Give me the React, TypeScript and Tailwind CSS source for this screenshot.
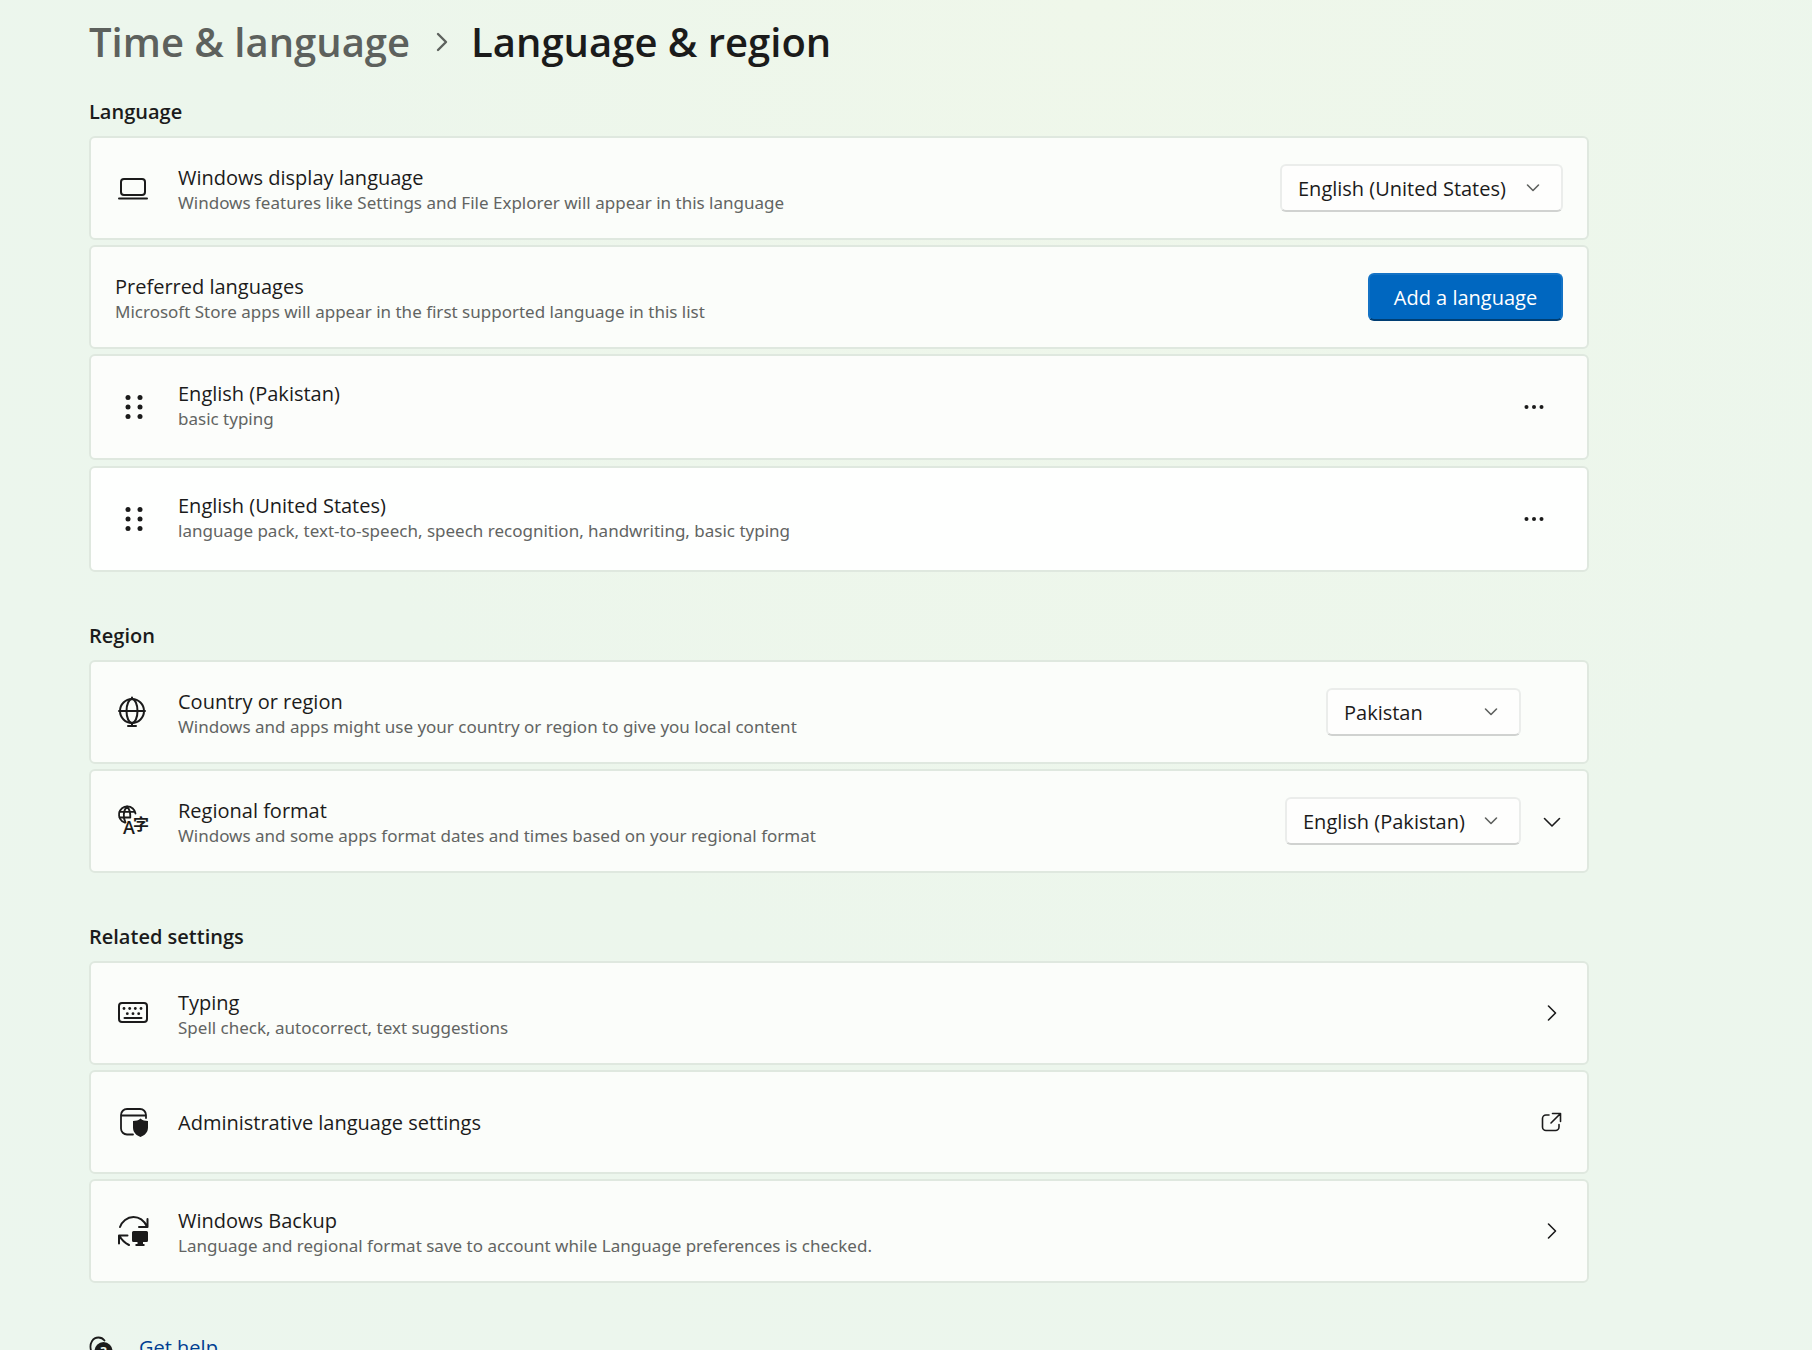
import type { ReactNode } from "react";

function Svg({ size, children }: { size: number; children: ReactNode }) {
  return (
    <svg
      width={size}
      height={size}
      viewBox={`0 0 ${size} ${size}`}
      fill="none"
      stroke="currentColor"
      strokeWidth="2"
      strokeLinecap="round"
      strokeLinejoin="round"
      aria-hidden
      className="shrink-0"
    >
      {children}
    </svg>
  );
}

const LaptopIcon = () => (
  <Svg size={36}>
    <rect x="6" y="9" width="24" height="16" rx="3" />
    <path d="M4 28.5H32" />
  </Svg>
);

const GripIcon = () => (
  <Svg size={36}>
    <g fill="currentColor" stroke="none">
      {[8.5, 18, 27.5].map((y) => (
        <g key={y}>
          <circle cx="13" cy={y} r="2.5" />
          <circle cx="25" cy={y} r="2.5" />
        </g>
      ))}
    </g>
  </Svg>
);

const GlobeIcon = () => (
  <Svg size={36}>
    <circle cx="17" cy="17" r="12" />
    <ellipse cx="17" cy="17" rx="5.5" ry="12" />
    <path d="M4 17H30M17 3.5V5M17 29V32M13 32H21" />
  </Svg>
);

const RegionalIcon = () => (
  <Svg size={36}>
    <g strokeWidth="1.8">
      <path d="M20.5 10.5A8.3 8.3 0 1 0 9.5 19.5" />
      <path d="M12 3.5C8 7.5 8 15 10.5 19.5M12 3.5C15 6.5 15.5 9.5 15.3 14.5M4.5 8.8H19.5M4.5 14.5H15" />
    </g>
    <g fill="currentColor" stroke="none">
      <text x="14" y="31" textAnchor="middle" fontSize="18" fontWeight="600" fontFamily="'Open Sans', sans-serif">
        A
      </text>
      <text x="26" y="26.5" textAnchor="middle" fontSize="16" fontWeight="700" fontFamily="'Noto Sans CJK SC', sans-serif">
        字
      </text>
    </g>
  </Svg>
);

const KeyboardIcon = () => (
  <Svg size={36}>
    <rect x="4" y="8" width="28" height="19" rx="3" />
    <path d="M9.5 23H26.5" />
    <g fill="currentColor" stroke="none">
      {[9, 14.7, 20.3, 26].map((x) => (
        <circle key={x} cx={x} cy="13.5" r="1.4" />
      ))}
      {[12.3, 18, 23.7].map((x) => (
        <circle key={x} cx={x} cy="18.7" r="1.4" />
      ))}
    </g>
  </Svg>
);

const AdminIcon = () => (
  <Svg size={36}>
    <path d="M18 30.5H12A6 6 0 0 1 6 24.5V11A6 6 0 0 1 12 5H25A6 6 0 0 1 31 11V14M6 11.5H31" strokeWidth="1.8" />
    <path
      d="M25.5 14.5C27.5 16.3 30 17 33 17V23.5C33 28.5 29.5 31.5 25.5 33C21.5 31.5 18 28.5 18 23.5V17C21 17 23.5 16.3 25.5 14.5Z"
      fill="currentColor"
      stroke="none"
    />
  </Svg>
);

const BackupIcon = () => (
  <Svg size={36}>
    <path d="M5 14C7 8.5 12 4 18.500 4C24.500 4 29 7.500 32 13.500M32.500 6V14H24" />
    <path d="M12.500 22.500H4V30.500M4.500 23C7 27.500 10 30 14 32" />
    <path
      d="M18.500 18H31.500A1.500 1.500 0 0 1 33 19.500V27.500A1.500 1.500 0 0 1 31.500 29H28V31H29.500V33H20.500V31H22.500V29H18.500A1.500 1.500 0 0 1 17 27.500V19.500A1.500 1.500 0 0 1 18.500 18Z"
      fill="currentColor"
      stroke="none"
    />
  </Svg>
);

const HelpIcon = () => (
  <Svg size={24}>
    <path d="M1.500 21C1.800 19 2.300 17 2 14.500C0 7 4 1.500 9.500 1.500C12 1.500 14 2.500 15.500 4.500" strokeWidth="1.800" />
    <circle cx="14.500" cy="15" r="9" fill="currentColor" stroke="none" />
    <text x="14.500" y="19.500" textAnchor="middle" fontSize="13" fontWeight="700" fontFamily="'Open Sans', sans-serif" fill="#ecf6ec" stroke="none">
      ?
    </text>
  </Svg>
);

const ChevronRight = () => (
  <Svg size={22}>
    <path d="M7.500 4L14.500 11L7.500 18" strokeWidth="1.600" />
  </Svg>
);

const ExternalIcon = () => (
  <Svg size={22}>
    <g strokeWidth="1.600">
      <path d="M8 4H5A3.500 3.500 0 0 0 1.500 7.500V16A3.500 3.500 0 0 0 5 19.500H14.500A3.500 3.500 0 0 0 18 16V13.500" />
      <path d="M11.500 2.500H19.500V10.500M19 3L10 12" />
    </g>
  </Svg>
);

const MoreIcon = () => (
  <Svg size={22}>
    <g fill="currentColor" stroke="none">
      <circle cx="3.500" cy="11" r="2" />
      <circle cx="11" cy="11" r="2" />
      <circle cx="18.500" cy="11" r="2" />
    </g>
  </Svg>
);

function Section({ title, children }: { title: string; children: ReactNode }) {
  return (
    <section className="mb-[50px]">
      <h2 className="mb-[10px] text-[20px] leading-7 font-semibold">{title}</h2>
      <div className="flex flex-col gap-[5px]">{children}</div>
    </section>
  );
}

const cardBase = "flex w-full items-center rounded-md border-2 border-[#dfe8df] px-6 text-left";

type RowBodyProps = { icon?: ReactNode; title: string; note?: string; htmlFor?: string; inset?: string };

function RowBody({ icon, title, note, htmlFor, inset = "pt-0.5" }: RowBodyProps) {
  return (
    <>
      {icon && <span className="mr-[27px] flex">{icon}</span>}
      <span className={`flex min-w-0 flex-1 flex-col ${inset}`}>
        {htmlFor ? (
          <label htmlFor={htmlFor} className="text-[20px] leading-7">
            {title}
          </label>
        ) : (
          <span className="text-[20px] leading-7">{title}</span>
        )}
        {note && (
          <span className="font-['Noto_Sans','Open_Sans',sans-serif] text-[17px] leading-[22px] text-[#626462]">{note}</span>
        )}
      </span>
    </>
  );
}

function Picker({ id, value, width }: { id: string; value: string; width: string }) {
  return (
    <span className={`relative flex ${width}`}>
      <select
        id={id}
        defaultValue={value}
        className="h-12 w-full appearance-none rounded-md border-2 border-[#ebedeb] border-b-[#d0d2d0] bg-[#fefefd] pt-0.5 pl-4 text-[20px] text-[#1b1b1b]"
      >
        <option>{value}</option>
      </select>
      <span className="pointer-events-none absolute inset-y-0 right-[23px] flex items-center text-[#5f615f]">
        <svg width="14" height="14" viewBox="0 0 14 14" fill="none" stroke="currentColor" strokeWidth="1.600" strokeLinecap="round" strokeLinejoin="round" aria-hidden>
          <path d="M1.500 4L7 9.500L12.500 4" />
        </svg>
      </span>
    </span>
  );
}

function LanguageRow({ name, features, tone }: { name: string; features: string; tone: string }) {
  return (
    <li className={`${cardBase} h-[106px] ${tone}`}>
      <RowBody icon={<GripIcon />} title={name} note={features} inset="pb-[5px]" />
      <button type="button" aria-label={`More options for ${name}`} className="mr-[18px] flex">
        <MoreIcon />
      </button>
    </li>
  );
}

function NavRow({ icon, title, note, action }: { icon: ReactNode; title: string; note?: string; action: ReactNode }) {
  return (
    <button type="button" className={`${cardBase} h-[104px] bg-[#fbfdfa]`}>
      <RowBody icon={icon} title={title} note={note} />
      {action}
    </button>
  );
}

export default function App() {
  return (
    <div className="h-screen overflow-hidden bg-[radial-gradient(ellipse_at_60%_0%,#eff7ea,#ecf6ec_55%,#ecf6ee)] font-['Open_Sans',sans-serif] text-[#1b1b1b]">
      <main className="ml-[89px] max-w-[1500px] pt-[15px]">
        <nav aria-label="Breadcrumb" className="mb-[29px] flex h-[54px] items-center text-[40px] leading-[54px] font-semibold">
          <a href="#time-language" className="text-[#5d615d]">
            Time &amp; language
          </a>
          <svg width="14" height="20" viewBox="0 0 14 20" fill="none" stroke="#5d615d" strokeWidth="2.4" strokeLinecap="round" strokeLinejoin="round" className="mr-[22px] ml-[25px]" aria-hidden>
            <path d="M3 2L11 10L3 18" />
          </svg>
          <h1>Language &amp; region</h1>
        </nav>

        <Section title="Language">
          <div className={`${cardBase} h-[104px] bg-[#fbfdfa]`}>
            <RowBody
              icon={<LaptopIcon />}
              title="Windows display language"
              note="Windows features like Settings and File Explorer will appear in this language"
              htmlFor="display-language"
            />
            <Picker id="display-language" value="English (United States)" width="w-[283px]" />
          </div>
          <div className={`${cardBase} h-[104px] bg-[#fbfdfa]`}>
            <RowBody title="Preferred languages" note="Microsoft Store apps will appear in the first supported language in this list" />
            <button
              type="button"
              className="h-12 w-[195px] rounded-md border-2 border-[#1473c5] border-b-[#003e73] bg-[#0067c0] pt-0.5 text-[20px] text-white"
            >
              Add a language
            </button>
          </div>
          <ul className="flex flex-col gap-1.5">
            <LanguageRow name="English (Pakistan)" features="basic typing" tone="bg-[#fcfdfb]" />
            <LanguageRow
              name="English (United States)"
              features="language pack, text-to-speech, speech recognition, handwriting, basic typing"
              tone="bg-[#fefffe]"
            />
          </ul>
        </Section>

        <Section title="Region">
          <div className={`${cardBase} h-[104px] bg-[#fbfdfa]`}>
            <RowBody
              icon={<GlobeIcon />}
              title="Country or region"
              note="Windows and apps might use your country or region to give you local content"
              htmlFor="country"
            />
            <Picker id="country" value="Pakistan" width="mr-[42px] w-[195px]" />
          </div>
          <div className={`${cardBase} h-[104px] bg-[#fbfdfa]`}>
            <RowBody
              icon={<RegionalIcon />}
              title="Regional format"
              note="Windows and some apps format dates and times based on your regional format"
              htmlFor="regional-format"
            />
            <Picker id="regional-format" value="English (Pakistan)" width="w-[236px]" />
            <button type="button" aria-label="Show regional format details" className="ml-5 flex">
              <Svg size={22}>
                <path d="M3.500 8.500L11 16L18.500 8.500" strokeWidth="1.600" />
              </Svg>
            </button>
          </div>
        </Section>

        <Section title="Related settings">
          <NavRow icon={<KeyboardIcon />} title="Typing" note="Spell check, autocorrect, text suggestions" action={<ChevronRight />} />
          <NavRow icon={<AdminIcon />} title="Administrative language settings" action={<ExternalIcon />} />
          <NavRow
            icon={<BackupIcon />}
            title="Windows Backup"
            note="Language and regional format save to account while Language preferences is checked."
            action={<ChevronRight />}
          />
        </Section>

        <a href="#get-help" className="flex w-fit items-center gap-[26px] pt-px">
          <HelpIcon />
          <span className="text-[20px] leading-7 text-[#003e92]">Get help</span>
        </a>
      </main>
    </div>
  );
}
